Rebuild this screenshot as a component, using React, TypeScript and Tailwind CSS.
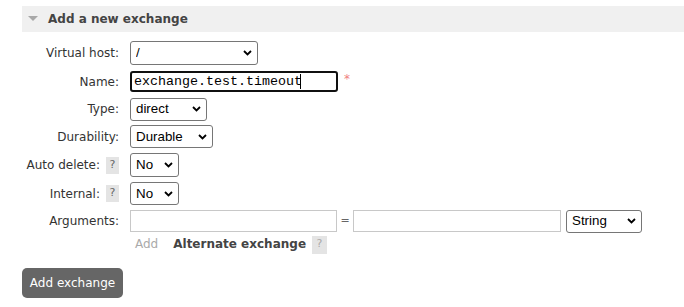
import type { ReactNode } from 'react';

const verdana = { fontFamily: '"DejaVu Sans", Verdana, sans-serif' };

function Chevron() {
  return (
    <svg width="9" height="6" viewBox="0 0 9 6" className="pointer-events-none absolute right-[6px] top-1/2 -translate-y-1/2">
      <path d="M1 1 L4.5 4.5 L8 1" fill="none" stroke="#000" strokeWidth="1.8" />
    </svg>
  );
}

function Select({ value, width, height = 'h-[23px]' }: { value: string; width: string; height?: string }) {
  return (
    <div className={`relative ${width} ${height}`}>
      <select
        defaultValue={value}
        className="h-full w-full appearance-none rounded-[3px] border border-[#767676] bg-white pl-[5px] text-[13.33px] text-black outline-none font-['Liberation_Sans',Arial,sans-serif]"
      >
        <option value={value}>{value}</option>
      </select>
      <Chevron />
    </div>
  );
}

function Help({ big }: { big?: boolean }) {
  return (
    <span
      className={`inline-flex items-center justify-center bg-[#e4e4e4] text-[11px] ${
        big ? 'h-[18px] w-[15px] text-[#aaa]' : 'h-[17px] w-[13px] text-[#666]'
      }`}
    >
      ?
    </span>
  );
}

function Row({ label, help, height, children }: { label: string; help?: boolean; height: string; children: ReactNode }) {
  return (
    <div className={`flex items-center ${height}`}>
      <div className="flex w-[119px] shrink-0 items-center justify-end gap-[6px]">
        <span>{label}</span>
        {help && <Help />}
      </div>
      <div className="ml-[11px] flex items-center">{children}</div>
    </div>
  );
}

export default function App() {
  return (
    <div className="h-[307px] w-[684px] bg-white pt-[6px] text-[12px] text-[#333]" style={verdana}>
      <div className="ml-[22px] flex h-[26px] items-center bg-[#f0f0f0]">
        <svg width="10" height="6" viewBox="0 0 10 6" className="ml-[6px]">
          <path d="M0 0 L10 0 L5 5 Z" fill="#a8a8a8" />
        </svg>
        <h2 className="ml-[10px] text-[12px] font-bold text-[#444]">Add a new exchange</h2>
      </div>

      <div className="mt-[6px]">
        <Row label="Virtual host:" height="h-[29px]">
          <Select value="/" width="w-[128px]" height="h-[24px]" />
        </Row>
        <Row label="Name:" height="h-[29px]">
          <div className="relative">
            <input
              defaultValue="exchange.test.timeout"
              className="h-[21px] w-[208px] rounded-[3px] border-2 border-[#101010] bg-white pl-[2px] text-[13.33px] text-black outline-none font-['Liberation_Mono','Courier_New',monospace]"
            />
            <span className="absolute left-[170px] top-[3px] h-[15px] w-[1px] bg-black" />
          </div>
          <span className="ml-[6px] -mt-[6px] text-[12px] text-[#f08080]">*</span>
        </Row>
        <Row label="Type:" height="h-[26px]">
          <Select value="direct" width="w-[77px]" />
        </Row>
        <Row label="Durability:" height="h-[29px]">
          <Select value="Durable" width="w-[83px]" />
        </Row>
        <Row label="Auto delete:" help height="h-[28px]">
          <Select value="No" width="w-[49px]" height="h-[24px]" />
        </Row>
        <Row label="Internal:" help height="h-[29px]">
          <Select value="No" width="w-[49px]" />
        </Row>
        <Row label="Arguments:" height="h-[26px]">
          <input className="h-[22px] w-[207px] border border-[#c8c8c8] bg-white outline-none" />
          <span className="w-[16px] text-center text-[11px] text-[#666]">=</span>
          <input className="h-[22px] w-[208px] border border-[#c8c8c8] bg-white outline-none" />
          <div className="ml-[5px]">
            <Select value="String" width="w-[76px]" />
          </div>
        </Row>
        <div className="ml-[135px] flex h-[20px] items-center">
          <span className="text-[#aaa]">Add</span>
          <span className="ml-[15px] font-bold text-[#444]">Alternate exchange</span>
          <span className="ml-[6px]">
            <Help big />
          </span>
        </div>
      </div>

      <button className="ml-[22px] mt-[14px] h-[30px] w-[101px] rounded-[5px] bg-[#666] text-[12px] text-white">
        Add exchange
      </button>
    </div>
  );
}
